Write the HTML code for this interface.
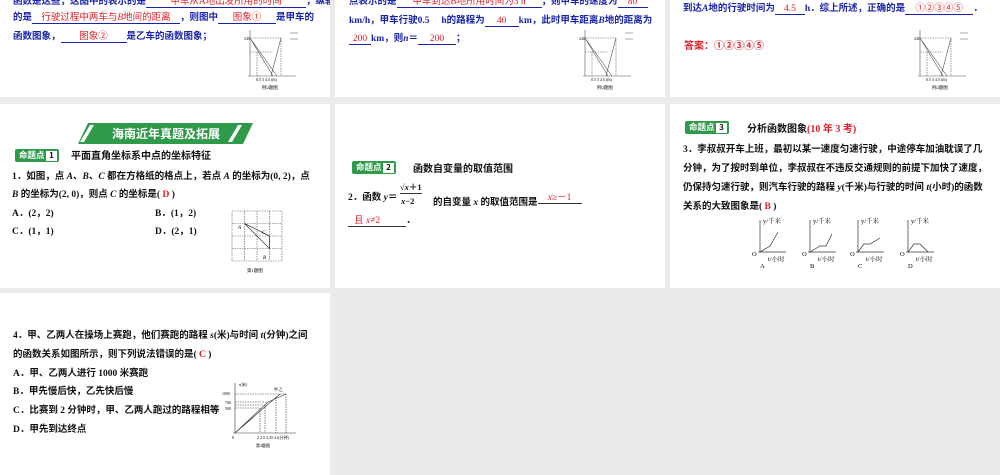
<!DOCTYPE html>
<html><head><meta charset="utf-8"><style>
*{margin:0;padding:0;box-sizing:border-box}
body{width:1000px;height:475px;background:#ebebeb;position:relative;overflow:hidden;font-family:"Liberation Serif","Noto Sans CJK SC",sans-serif;font-size:9.5px;color:#111}
.s{position:absolute;background:#fff;overflow:hidden}
.a{position:absolute;white-space:nowrap}
.b{color:#1a24a8;font-weight:bold}
.r{color:#e0202a}
.u{border-bottom:1px solid #1a24a8;display:inline-block;text-align:center;color:#e0202a;font-weight:normal}
.k{font-weight:bold}
.tag{position:absolute;height:13px;background:#2e9a4a;color:#fff;font-size:8.5px;line-height:13px;padding-left:4px;width:44px;border-radius:2px;font-family:"Noto Sans CJK SC",sans-serif;font-weight:bold}
.tag span{position:absolute;right:2px;top:1.5px;width:11px;height:10px;background:#fff;color:#111;text-align:center;line-height:10px;font-size:8px}
.h{font-family:"Noto Sans CJK SC",sans-serif;font-weight:bold;font-size:10px}
</style></head><body>

<!-- row 1 -->
<div class="s" style="left:0;top:0;width:330px;height:97px">
 <div class="a b" style="left:13px;top:-7px">函数是这些，这图中的表示的是<span class="u" style="width:160px">甲车从A地出发所用的时间</span>，纵轴表示</div>
 <div class="a b" style="left:13px;top:9px">的是<span class="u" style="width:148px">行驶过程中两车与<i>B</i>地间的距离</span>，则图中<span class="u" style="width:58px">图象①</span>是甲车的</div>
 <div class="a b" style="left:13px;top:28px">函数图象，<span class="u" style="width:66px">图象②</span>是乙车的函数图象；</div>
 <svg class="a" style="left:240px;top:28px" width="80" height="62"><g stroke="#555" fill="none" stroke-width=".6"><path d="M10 48V2M8 48H56"/><path d="M10 10H41M10 24H33" stroke-dasharray="1.5 1"/><path d="M10 10L33 48M10 10L37 48M41 10L31 48" /><path d="M41 10V48M17 24V48" stroke-dasharray="1.5 1"/><path d="M50 5h8M50 11h8"/></g><text x="4" y="12" font-size="4">240</text><text x="16" y="53" font-size="4">0.5 3 4.5 t(h)</text><text x="22" y="61" font-size="4.5">例2题图</text></svg>
</div>
<div class="s" style="left:335px;top:0;width:330px;height:97px">
 <div class="a b" style="left:14px;top:-7px">点表示的是<span class="u" style="width:145px">甲车到达B地所用时间为3 h</span>，则甲车的速度为<span class="u" style="width:30px">80</span></div>
 <div class="a b" style="left:14px;top:12px">km/h，甲车行驶0.5　 h的路程为<span class="u" style="width:34px">40</span>km，此时甲车距离<i>B</i>地的距离为</div>
 <div class="a b" style="left:14px;top:30px"><span class="u" style="width:22px">200</span>km，则<i>n</i>＝<span class="u" style="width:38px">200</span>；</div>
 <svg class="a" style="left:240px;top:28px" width="80" height="62"><g stroke="#555" fill="none" stroke-width=".6"><path d="M10 48V2M8 48H56"/><path d="M10 10H41M10 24H33" stroke-dasharray="1.5 1"/><path d="M10 10L33 48M10 10L37 48M41 10L31 48"/><path d="M41 10V48M17 24V48" stroke-dasharray="1.5 1"/><path d="M50 5h8M50 11h8"/></g><text x="4" y="12" font-size="4">240</text><text x="16" y="53" font-size="4">0.5 3 4.5 t(h)</text><text x="22" y="61" font-size="4.5">例2题图</text></svg>
</div>
<div class="s" style="left:670px;top:0;width:330px;height:97px">
 <div class="a b" style="left:13px;top:0px">到达<i>A</i>地的行驶时间为<span class="u" style="width:30px">4.5</span>h．综上所述，正确的是<span class="u" style="width:68px">①②③④⑤</span>．</div>
 <div class="a r k" style="left:14px;top:37px;font-size:10px">答案：①②③④⑤</div>
 <svg class="a" style="left:240px;top:28px" width="80" height="62"><g stroke="#555" fill="none" stroke-width=".6"><path d="M10 48V2M8 48H56"/><path d="M10 10H41M10 24H33" stroke-dasharray="1.5 1"/><path d="M10 10L33 48M10 10L37 48M41 10L31 48"/><path d="M41 10V48M17 24V48" stroke-dasharray="1.5 1"/><path d="M50 5h8M50 11h8"/></g><text x="4" y="12" font-size="4">240</text><text x="16" y="53" font-size="4">0.5 3 4.5 t(h)</text><text x="22" y="61" font-size="4.5">例2题图</text></svg>
</div>

<!-- row 2 -->
<div class="s" style="left:0;top:104px;width:330px;height:184px">
 <svg class="a" style="left:78px;top:19px" width="176" height="22"><polygon points="10,0 175,0 165,21 0,21" fill="#2e9a4a"/><polygon points="12,2 16,2 6,19 2,19" fill="#fff"/><polygon points="160,2 164,2 154,19 150,19" fill="#fff"/><text x="88" y="15" fill="#fff" font-size="12" font-weight="bold" text-anchor="middle" font-family="Noto Sans CJK SC,sans-serif">海南近年真题及拓展</text></svg>
 <div class="tag" style="left:15px;top:45px">命题点<span>1</span></div>
 <div class="a h" style="left:71px;top:43px">平面直角坐标系中点的坐标特征</div>
 <div class="a k" style="left:12px;top:64px">1．如图，点 <i>A</i>、<i>B</i>、<i>C</i> 都在方格纸的格点上，若点 <i>A</i> 的坐标为(0, 2)，点</div>
 <div class="a k" style="left:12px;top:82px"><i>B</i> 的坐标为(2, 0)，则点 <i>C</i> 的坐标是( <span class="r">D</span> )</div>
 <div class="a k" style="left:12px;top:101px">A．(2，2)</div>
 <div class="a k" style="left:155px;top:101px">B．(1，2)</div>
 <div class="a k" style="left:12px;top:119px">C．(1，1)</div>
 <div class="a k" style="left:155px;top:119px">D．(2，1)</div>
 <svg class="a" style="left:230px;top:105px" width="55" height="65"><g stroke="#555" stroke-width=".6" fill="none" stroke-dasharray="1.5 1"><rect x="2" y="2" width="50" height="50"/><path d="M14.5 2V52M27 2V52M39.5 2V52M2 14.5H52M2 27H52M2 39.5H52"/></g><g stroke="#333" stroke-width=".7"><path d="M14.5 14.5L39.5 27M14.5 14.5L39.5 39.5M39.5 27V39.5"/></g><text x="8" y="20" font-size="5" font-style="italic">A</text><text x="32" y="25" font-size="5" font-style="italic">C</text><text x="33" y="50" font-size="5" font-style="italic">B</text><text x="17" y="63" font-size="4.5">第1题图</text></svg>
</div>
<div class="s" style="left:335px;top:104px;width:330px;height:184px">
 <div class="tag" style="left:17px;top:57px">命题点<span>2</span></div>
 <div class="a h" style="left:78px;top:56px">函数自变量的取值范围</div>
 <div class="a k" style="left:13px;top:85px">2．函数 <i>y</i>＝</div>
 <div class="a k" style="left:65px;top:77px;font-size:8.5px;border-bottom:.6px solid #333">√<i>x</i>＋1</div>
 <div class="a k" style="left:66px;top:92px;font-size:8.5px"><i>x</i>−2</div>
 <div class="a k" style="left:98px;top:85px">的自变量 <i>x</i> 的取值范围是<span class="u" style="width:44px;border-color:#333;vertical-align:5px"><i>x</i>≥－1</span></div>
 <div class="a k" style="left:13px;top:108px"><span class="u" style="width:58px;border-color:#333;text-align:left;padding-left:6px">且 <i>x</i>≠2</span>．</div>
</div>
<div class="s" style="left:670px;top:104px;width:330px;height:184px">
 <div class="tag" style="left:15px;top:17px">命题点<span>3</span></div>
 <div class="a h" style="left:77px;top:16px">分析函数图象<span class="r" style="font-family:'Liberation Serif','Noto Sans CJK SC',serif">(10 年 3 考)</span></div>
 <div class="a k" style="left:13px;top:37px">3．李叔叔开车上班，最初以某一速度匀速行驶，中途停车加油耽误了几</div>
 <div class="a k" style="left:13px;top:56px">分钟，为了按时到单位，李叔叔在不违反交通规则的前提下加快了速度，</div>
 <div class="a k" style="left:13px;top:75px">仍保持匀速行驶，则汽车行驶的路程 <i>y</i>(千米)与行驶的时间 <i>t</i>(小时)的函数</div>
 <div class="a k" style="left:13px;top:94px">关系的大致图象是( <span class="r">B</span> )</div>
 <svg class="a" style="left:78px;top:112px" width="200" height="54"><g stroke="#333" stroke-width=".7" fill="none"><path d="M12 36V4M10 36H38M12 36L22 30L30 16"/><path d="M62 36V4M60 36H88M62 36L72 30H78L84 18"/><path d="M110 36V4M108 36H136M110 36L116 28H122L132 22"/><path d="M160 36V4M158 36H186M160 36L166 28H172L180 36"/></g><g font-size="6.5" font-family="Liberation Serif,Noto Serif CJK SC,serif"><text x="15" y="7">y/千米</text><text x="65" y="7">y/千米</text><text x="113" y="7">y/千米</text><text x="163" y="7">y/千米</text><text x="4" y="40">O</text><text x="54" y="40">O</text><text x="102" y="40">O</text><text x="152" y="40">O</text><text x="20" y="45">t/小时</text><text x="70" y="45">t/小时</text><text x="118" y="45">t/小时</text><text x="168" y="45">t/小时</text><text x="12" y="52">A</text><text x="62" y="52">B</text><text x="110" y="52">C</text><text x="160" y="52">D</text></g></svg>
</div>

<!-- row 3 -->
<div class="s" style="left:0;top:293px;width:330px;height:182px">
 <div class="a k" style="left:13px;top:34px">4．甲、乙两人在操场上赛跑，他们赛跑的路程 <i>s</i>(米)与时间 <i>t</i>(分钟)之间</div>
 <div class="a k" style="left:13px;top:53px">的函数关系如图所示，则下列说法错误的是( <span class="r">C</span> )</div>
 <div class="a k" style="left:13px;top:72px">A．甲、乙两人进行 1000 米赛跑</div>
 <div class="a k" style="left:13px;top:90px">B．甲先慢后快，乙先快后慢</div>
 <div class="a k" style="left:13px;top:109px">C．比赛到 2 分钟时，甲、乙两人跑过的路程相等</div>
 <div class="a k" style="left:13px;top:128px">D．甲先到达终点</div>
 <svg class="a" style="left:222px;top:88px" width="92" height="68"><g stroke="#333" stroke-width=".6" fill="none"><path d="M13 52V2M11 52H74M13 52L46 21L64 13M13 52L58 13"/><path d="M13 13H64M13 21H46M13 24H41M13 27H38" stroke-dasharray="1.5 1"/><path d="M38 27V52M43 24V52M54 16V52M64 13V52" stroke-dasharray="1.5 1"/></g><g font-size="4"><text x="17" y="5">s(米)</text><text x="0" y="14">1000</text><text x="3" y="23">700</text><text x="3" y="29">500</text><text x="10" y="58">0</text><text x="35" y="58">2 2.5 3.25 4 t(分钟)</text><text x="52" y="10">甲 乙</text><text x="34" y="66">第4题图</text></g></svg>
</div>
</body></html>
